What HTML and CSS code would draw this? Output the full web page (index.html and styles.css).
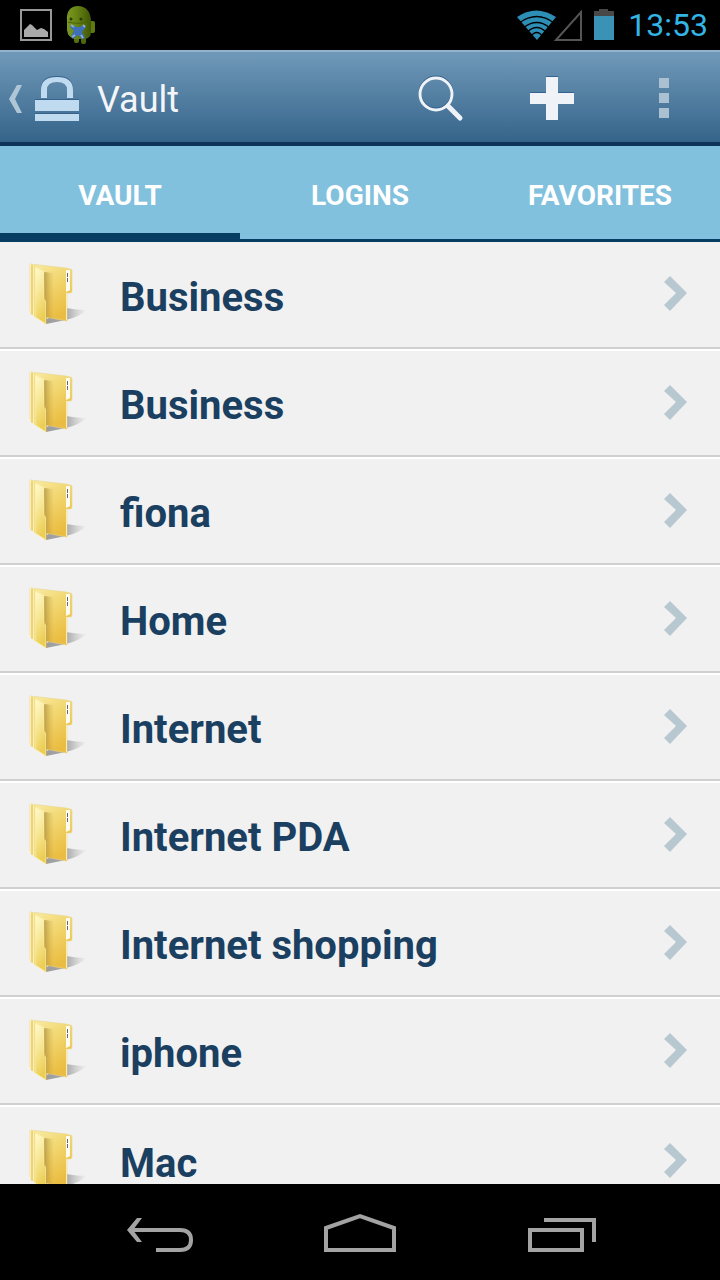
FILE: index.html
```html
<!DOCTYPE html>
<html lang="en">
<head>
<meta charset="utf-8">
<meta name="viewport" content="width=device-width, initial-scale=1">
<title>Vault</title>
<link rel="stylesheet" href="styles.css">
</head>
<body>
<svg class="defs" aria-hidden="true">
  <defs>
    <linearGradient id="back" x1="0" y1="0" x2="0.5" y2="1">
      <stop offset="0" stop-color="#f9eda9"/><stop offset="0.45" stop-color="#f2d873"/><stop offset="1" stop-color="#eabd42"/>
    </linearGradient>
    <linearGradient id="front" x1="0" y1="0" x2="0.3" y2="1">
      <stop offset="0" stop-color="#fffbd0"/><stop offset="0.5" stop-color="#f7e795"/><stop offset="1" stop-color="#ecce55"/>
    </linearGradient>
    <linearGradient id="fold" x1="0" y1="0" x2="1" y2="0">
      <stop offset="0" stop-color="#94762a" stop-opacity="0.6"/><stop offset="1" stop-color="#c79a35" stop-opacity="0"/>
    </linearGradient>
    <linearGradient id="shade" x1="0" y1="0" x2="1" y2="0">
      <stop offset="0" stop-color="#77777a" stop-opacity="0.7"/><stop offset="0.5" stop-color="#77777a" stop-opacity="0.6"/><stop offset="1" stop-color="#9a9a9a" stop-opacity="0"/>
    </linearGradient>
    <linearGradient id="droid" x1="0" y1="0" x2="1" y2="0">
      <stop offset="0" stop-color="#7a9a22"/><stop offset="0.4" stop-color="#688513"/><stop offset="1" stop-color="#3f5608"/>
    </linearGradient>
    <symbol id="folder" viewBox="0 0 60 64">
      <path d="M16 57 37 45Q48 47 58 47Q50 54 37 57L17 61Z" fill="url(#shade)"/>
      <path d="M1 1 37 5 41 6Q43 6 43 8V28Q43 30 41 30H38V58L16 54 1 48Z" fill="url(#back)" stroke="#ead58a" stroke-width="0.600"/>
      <path d="M15 9 25 10V56L17 54Z" fill="url(#fold)"/>
      <path d="M37 7H41V27L37 29Z" fill="#fffdf2"/>
      <path d="M38.500 10V14M38.500 15V19" stroke="#62697a" stroke-width="1"/>
      <path d="M37.500 30V57" stroke="#fbecad" stroke-width="1"/>
      <path d="M1 1 7 3V54L1 50Z" fill="#f3dc86"/>
      <path d="M1.500 1V50M4.500 2V53" stroke="#fdefb0" stroke-width="1"/>
      <path d="M3 2V52M6 4V54" stroke="#e3c565" stroke-width="0.800"/>
      <path d="M6 4 14 8Q15 9 15 12V36L17 38V61L6 54Z" fill="url(#front)" stroke="#fbedab" stroke-width="0.800"/>
      <path d="M15.500 11V36L17.500 38V61" fill="none" stroke="#b9994a" stroke-width="0.600"/>
    </symbol>
    <symbol id="chevron" viewBox="0 0 23 35">
      <path d="M6 0 23 17 6 35 0 29 12 17 0 6Z" fill="#b7c8d1"/>
    </symbol>
  </defs>
</svg>

<header class="status">
  <div class="status-group">
    <svg width="34" height="34" viewBox="0 0 34 34" aria-hidden="true">
      <rect x="2" y="2" width="30" height="30" fill="none" stroke="#999" stroke-width="2"/>
      <path d="M5 29V22L11 16 13 17 18 22 22 20 25 21 29 24V29Z" fill="#aaa"/>
    </svg>
    <svg width="30" height="40" viewBox="0 0 30 40" aria-hidden="true">
      <rect x="22" y="16" width="7" height="12" rx="2" fill="#5f7b10"/>
      <rect x="8" y="30" width="5" height="8" rx="2" fill="#55720d"/>
      <rect x="15" y="30" width="5" height="9" rx="2" fill="#4c680c"/>
      <path d="M1 16C0 6 5 1 12 1S25 6 25 16V27Q25 34 18 34H9Q2 33 1 25Z" fill="url(#droid)"/>
      <path d="M2 17Q13 20 24 16" fill="none" stroke="#4a600c" stroke-width="1"/>
      <circle cx="5" cy="14" r="1.500" fill="#2c3a08"/><circle cx="15" cy="14" r="1.500" fill="#2c3a08"/>
      <path d="M5 20 11 22H14L18 20 20 22 16 27 19 33 16 34 12 30 7 34 5 31 8 26 4 22Z" fill="#3f6fb5"/>
      <path d="M5 20 8 22M17 20 19 22M6 32 9 30M17 33 15 30" stroke="#8faed5" stroke-width="2"/>
    </svg>
  </div>
  <div class="status-group status-right">
    <svg width="98" height="34" viewBox="0 0 98 34" aria-hidden="true">
      <path d="M0 9Q19 -4 39 9L20 32Z" fill="#2e8fb6"/>
      <path d="M2 15Q20 2 37 15M6 20Q20 9 33 20M10 24Q20 15 29 24M13 29Q20 20 26 29" fill="none" stroke="#000" stroke-width="1.400"/>
      <path d="M39 32 64 4V32Z" fill="none" stroke="#555" stroke-width="2"/>
      <path d="M77 8V3H82V1H91V3H97V8Z" fill="#484848"/>
      <rect x="77" y="8" width="20" height="24" fill="#3a93b7"/>
    </svg>
    <time class="clock">13:53</time>
  </div>
</header>

<div class="action-bar">
  <button class="up" type="button">
    <svg width="72" height="52" viewBox="0 0 72 52" aria-hidden="true">
      <path d="M9 11H14L7 25 14 39H9L1 25Z" fill="#afc6d6"/>
      <path d="M33 22V15Q33 2 49 2T65 15V22H59V15Q59 7 49 7T39 15V22Z" fill="#35618d"/>
      <path d="M33 24V16Q33 3 49 3T65 16V24H59V16Q59 8 49 8T39 16V24Z" fill="#c0dbef"/>
      <path d="M27 25H71V27H27ZM27 39H71V41H27Z" fill="#35618d"/>
      <path d="M27 26H71V37H27ZM27 40H71V47H27Z" fill="#c0dbef"/>
    </svg>
    <span>Vault</span>
  </button>
  <div class="actions">
    <button type="button" aria-label="Search">
      <svg width="48" height="48" viewBox="0 0 48 48" aria-hidden="true">
        <circle cx="20" cy="19" r="16" fill="none" stroke="#35618d" stroke-width="3"/>
        <circle cx="20" cy="20" r="16" fill="none" stroke="#eff3f8" stroke-width="3"/>
        <path d="M32 32 44 44" stroke="#eff3f8" stroke-width="5" stroke-linecap="round"/>
      </svg>
    </button>
    <button type="button" aria-label="Add">
      <svg width="48" height="48" viewBox="0 0 48 48" aria-hidden="true">
        <path d="M18 2H30V18H46V22H2V18H18Z" fill="#35618d"/>
        <path d="M18 3H30V19H46V30H30V46H18V30H2V19H18Z" fill="#eff3f8"/>
      </svg>
    </button>
    <button type="button" aria-label="More options">
      <svg width="48" height="48" viewBox="0 0 48 48" aria-hidden="true">
        <path d="M19 4H29V14H19ZM19 19H29V29H19ZM19 34H29V44H19Z" fill="#abc1d1"/>
      </svg>
    </button>
  </div>
</div>

<nav class="tabs">
  <a class="tab active" href="#vault" aria-current="page">VAULT</a>
  <a class="tab" href="#logins">LOGINS</a>
  <a class="tab" href="#favorites">FAVORITES</a>
</nav>

<main class="content">
  <ul class="folders">
    <li><a href="#business"><svg class="folder"><use href="#folder"/></svg><span>Business</span><svg class="chevron"><use href="#chevron"/></svg></a></li>
    <li><a href="#business-2"><svg class="folder"><use href="#folder"/></svg><span>Business</span><svg class="chevron"><use href="#chevron"/></svg></a></li>
    <li><a href="#fiona"><svg class="folder"><use href="#folder"/></svg><span>fiona</span><svg class="chevron"><use href="#chevron"/></svg></a></li>
    <li><a href="#home"><svg class="folder"><use href="#folder"/></svg><span>Home</span><svg class="chevron"><use href="#chevron"/></svg></a></li>
    <li><a href="#internet"><svg class="folder"><use href="#folder"/></svg><span>Internet</span><svg class="chevron"><use href="#chevron"/></svg></a></li>
    <li><a href="#internet-pda"><svg class="folder"><use href="#folder"/></svg><span>Internet PDA</span><svg class="chevron"><use href="#chevron"/></svg></a></li>
    <li><a href="#internet-shopping"><svg class="folder"><use href="#folder"/></svg><span>Internet shopping</span><svg class="chevron"><use href="#chevron"/></svg></a></li>
    <li><a href="#iphone"><svg class="folder"><use href="#folder"/></svg><span>iphone</span><svg class="chevron"><use href="#chevron"/></svg></a></li>
    <li><a href="#mac"><svg class="folder"><use href="#folder"/></svg><span>Mac</span><svg class="chevron"><use href="#chevron"/></svg></a></li>
  </ul>
</main>

<footer class="nav-bar">
  <button type="button" aria-label="Back">
    <svg width="72" height="48" viewBox="0 0 72 48" fill="none" stroke="#a3a3a3" stroke-width="4" aria-hidden="true">
      <path d="M9 20H57Q68 20 68 30T57 40H33"/>
      <path d="M14 8H19L10 20 19 32H14L4 20Z" fill="#a3a3a3" stroke="none"/>
    </svg>
  </button>
  <button type="button" aria-label="Home">
    <svg width="72" height="48" viewBox="0 0 72 48" fill="none" stroke="#a3a3a3" stroke-width="4" aria-hidden="true">
      <path d="M2 18 36 6 70 18V40H2Z"/>
    </svg>
  </button>
  <button type="button" aria-label="Recent apps">
    <svg width="72" height="48" viewBox="0 0 72 48" fill="none" stroke="#a3a3a3" stroke-width="4" aria-hidden="true">
      <path d="M5 20H57V40H5ZM19 10H69V32"/>
    </svg>
  </button>
</footer>
</body>
</html>
```
FILE: styles.css
```css
* {
  box-sizing: border-box;
}

body {
  margin: 0;
  height: 100vh;
  display: flex;
  flex-direction: column;
  background: #000;
  font-family: Roboto, "Liberation Sans", sans-serif;
}

svg {
  display: block;
  flex: none;
}

button {
  margin: 0;
  padding: 0;
  border: 0;
  background: none;
  color: inherit;
  font: inherit;
}

a {
  color: inherit;
  text-decoration: none;
}

.defs {
  position: absolute;
  width: 0;
  height: 0;
}

.status {
  flex: none;
  height: 50px;
  padding: 0 12px 0 19px;
  display: flex;
  align-items: center;
  justify-content: space-between;
}

.status-group {
  display: flex;
  align-items: center;
  gap: 13px;
}

.clock {
  color: #33b5e5;
  font-size: 32px;
  line-height: 48px;
}

.action-bar {
  flex: none;
  height: 96px;
  padding: 2px 0 0 8px;
  display: flex;
  align-items: center;
  justify-content: space-between;
  border-top: 2px solid #92b3cc;
  border-bottom: 4px solid #0e345a;
  background: linear-gradient(#7099b9, #35648a);
}

.up {
  padding-top: 4px;
  display: flex;
  align-items: center;
  gap: 17px;
  color: #f3f5f8;
  font-size: 36px;
  line-height: 48px;
}

.actions {
  display: flex;
}

.actions button {
  width: 112px;
  display: flex;
  justify-content: center;
}

.tabs {
  flex: none;
  height: 96px;
  display: flex;
  background: #81c1dd;
  border-bottom: 3px solid #053d63;
}

.tab {
  flex: 1;
  display: flex;
  align-items: center;
  justify-content: center;
  padding-top: 12px;
  border-bottom: 6px solid transparent;
  color: #fff;
  font-size: 28px;
  font-weight: 700;
}

.tab.active {
  border-color: #053d63;
}

.content {
  flex: 1;
  min-height: 0;
  overflow: hidden;
  background: #f1f1f1;
}

.folders {
  margin: 0;
  padding: 0;
  list-style: none;
}

.folders li {
  border-top: 2px solid #fff;
  border-bottom: 2px solid #d0d0d0;
}

.folders li:first-child {
  border-top: 0;
}

.folders a {
  min-height: 104px;
  padding: 0 33px 0 29px;
  display: flex;
  align-items: center;
  gap: 31px;
}

.folders li:first-child a {
  min-height: 105px;
}

.folders li:last-child a {
  min-height: 108px;
}

.folders span {
  flex: 1;
  padding-top: 6px;
  color: #1a3f60;
  font-size: 40px;
  font-weight: 700;
  line-height: 40px;
}

.folder {
  width: 60px;
  height: 64px;
}

.chevron {
  width: 23px;
  height: 35px;
  margin-bottom: 2px;
}

.nav-bar {
  flex: none;
  height: 96px;
  padding: 4px 59px 0;
  display: flex;
  align-items: center;
}

.nav-bar button {
  flex: 1;
  display: flex;
  align-items: center;
  justify-content: center;
}
```
